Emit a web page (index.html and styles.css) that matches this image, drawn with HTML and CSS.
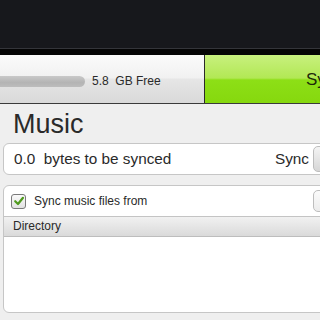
FILE: index.html
```html
<!DOCTYPE html>
<html>
<head>
<meta charset="utf-8">
<link rel="stylesheet" href="styles.css">
</head>
<body>
<div class="top"></div>
<div class="stripe"></div>
<div class="bar">
  <div class="capacity">
    <div class="pill"></div>
    <span class="free">5.8  GB Free</span>
  </div>
  <div class="syncbtn"><span>Sync</span></div>
</div>
<h1 class="title">Music</h1>
<div class="panel summary">
  <span class="bytes">0.0  bytes to be synced</span>
  <span class="synclabel">Sync</span>
  <span class="mini"></span>
</div>
<div class="panel files">
  <div class="checkrow">
    <span class="check"><svg width="12" height="12" viewBox="0 0 12 12"><path d="M2.2 6.2 L5 9 L10 2.8" fill="none" stroke="#4f9a1e" stroke-width="2.2" stroke-linecap="round" stroke-linejoin="round"/></svg></span>
    <span class="checktext">Sync music files from</span>
    <span class="mini mini2"></span>
  </div>
  <div class="colhead">Directory</div>
  <div class="list"></div>
</div>
</body>
</html>
```
FILE: styles.css
```css
html, body {
  margin: 0;
  padding: 0;
}
body {
  width: 320px;
  height: 320px;
  overflow: hidden;
  background: #efefef;
  font-family: "Liberation Sans", Arial, sans-serif;
  color: #2a2a2a;
}
.top {
  height: 48px;
  background: #17181c;
}
.stripe {
  height: 6px;
  border-top: 1px solid #34353a;
  background: #050505;
}
.bar {
  display: flex;
  height: 48px;
  border-bottom: 1px solid #3a3a3a;
}
.capacity {
  width: 204px;
  display: flex;
  align-items: center;
  background: linear-gradient(#fbfbfb 0%, #f1f1f1 48%, #e6e6e6 50%, #d9d9d9 100%);
  overflow: hidden;
}
.pill {
  flex: none;
  width: 105px;
  height: 11px;
  margin-left: -20px;
  margin-top: 4px;
  border-radius: 6px;
  background: linear-gradient(#c9c9c9, #b4b4b4 60%, #bdbdbd);
}
.free {
  margin-left: 7px;
  margin-top: 4px;
  font-size: 12px;
  white-space: pre;
}
.syncbtn {
  flex: 1;
  border-left: 1px solid #2a2a2a;
  background: linear-gradient(#c8f07e 0%, #b2e855 48%, #8ddf16 52%, #86d80e 100%);
  display: flex;
  align-items: center;
  overflow: hidden;
  white-space: nowrap;
}
.syncbtn span {
  margin-left: 101px;
  margin-top: 2px;
  font-size: 17px;
  color: #1e2a0a;
}
.title {
  margin: 5px 0 4px 13px;
  font-size: 27px;
  font-weight: normal;
  line-height: 30px;
}
.panel {
  margin-left: 3px;
  margin-right: -20px;
  background: #fff;
  border: 1px solid #c6c6c6;
  border-radius: 6px;
}
.summary {
  height: 30px;
  display: flex;
  align-items: center;
  overflow: hidden;
}
.bytes {
  margin-left: 10px;
  font-size: 15.3px;
  white-space: pre;
}
.synclabel {
  margin-left: auto;
  font-size: 15.3px;
}
.mini {
  flex: none;
  width: 24px;
  height: 24px;
  margin-left: 4px;
  border: 1px solid #bdbdbd;
  border-radius: 5px;
  background: linear-gradient(#f4f4f4, #d6d6d6);
}
.files {
  margin-top: 10px;
  height: 126px;
  overflow: hidden;
}
.checkrow {
  height: 30px;
  display: flex;
  align-items: center;
}
.check {
  flex: none;
  width: 13px;
  height: 13px;
  margin-left: 7px;
  border: 1px solid #7a7a7a;
  border-radius: 3px;
  background: linear-gradient(#fafafa, #e2e2e2);
  display: flex;
  align-items: center;
  justify-content: center;
}
.checktext {
  margin-left: 8px;
  font-size: 12px;
}
.mini2 {
  margin-left: auto;
  width: 24px;
  height: 20px;
  background: linear-gradient(#fbfbfb, #ececec);
}
.colhead {
  height: 19px;
  line-height: 19px;
  padding-left: 9px;
  font-size: 12px;
  border-top: 1px solid #c4c4c4;
  border-bottom: 1px solid #bdbdbd;
  background: linear-gradient(#f1f1f1, #dadada);
}
.list {
  height: 76px;
}
```
